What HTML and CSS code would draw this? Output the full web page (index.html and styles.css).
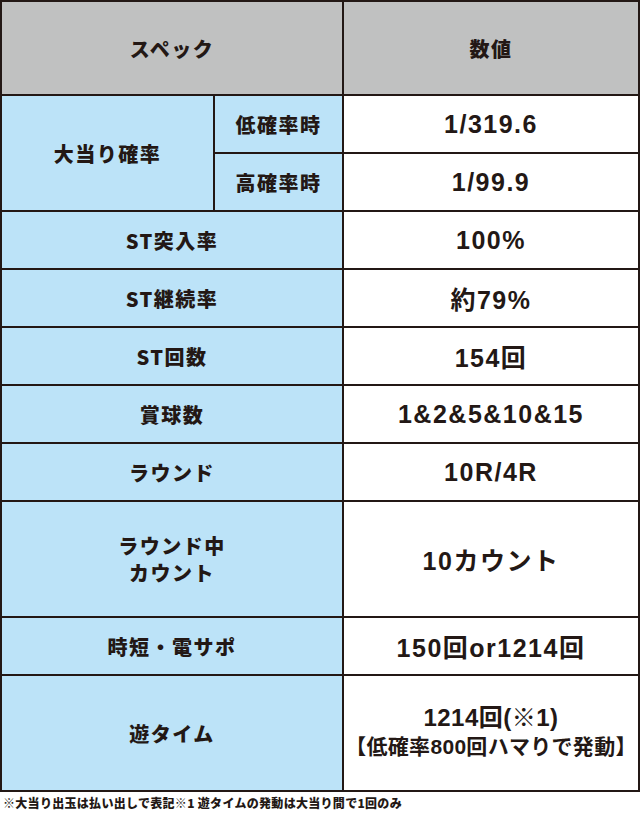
FILE: index.html
```html
<!DOCTYPE html>
<html lang="ja">
<head>
<meta charset="utf-8">
<link rel="stylesheet" href="styles.css">
</head>
<body>
<div class="spec">
  <div class="cell head label-span">スペック</div>
  <div class="cell head value">数値</div>

  <div class="cell label rs2">大当り確率</div>
  <div class="cell label">低確率時</div>
  <div class="cell value num">1/319.6</div>
  <div class="cell label">高確率時</div>
  <div class="cell value num">1/99.9</div>

  <div class="cell label label-span">ST突入率</div>
  <div class="cell value num">100%</div>

  <div class="cell label label-span">ST継続率</div>
  <div class="cell value num">約79%</div>

  <div class="cell label label-span">ST回数</div>
  <div class="cell value num">154回</div>

  <div class="cell label label-span">賞球数</div>
  <div class="cell value num">1&amp;2&amp;5&amp;10&amp;15</div>

  <div class="cell label label-span">ラウンド</div>
  <div class="cell value num">10R/4R</div>

  <div class="cell label label-span rs2 multi">ラウンド中<br>カウント</div>
  <div class="cell value num rs2">10カウント</div>

  <div class="cell label label-span">時短・電サポ</div>
  <div class="cell value num">150回or1214回</div>

  <div class="cell label label-span rs2">遊タイム</div>
  <div class="cell value num rs2 multi"><span class="big">1214回(※1)</span><br>【低確率800回ハマりで発動】</div>
</div>
<p class="note">※大当り出玉は払い出しで表記※1 遊タイムの発動は大当り間で1回のみ</p>
</body>
</html>
```

FILE: styles.css
```css
html, body {
  margin: 0;
  padding: 0;
  background: #ffffff;
}

body {
  width: 640px;
  color: #231815;
  font-family: "Liberation Sans", Arial, "Noto Sans CJK JP", sans-serif;
  font-weight: bold;
}

.spec {
  display: grid;
  grid-template-columns: 211px 127px 294px;
  grid-template-rows: 92px repeat(12, 56px);
  gap: 2px;
  padding: 2px;
  background: #231815;
}

.cell {
  display: flex;
  align-items: center;
  justify-content: center;
  text-align: center;
  white-space: nowrap;
}

.head,
.label {
  font-family: "Noto Sans CJK JP", sans-serif;
  font-size: 20px;
  letter-spacing: 1.5px;
  font-weight: 900;
}

.head {
  background: #c0c1c1;
}

.label {
  background: #bce3f8;
}

.label-span {
  grid-column: span 2;
}

.value {
  background: #ffffff;
}

.head.value {
  background: #c0c1c1;
}

.num {
  font-family: "Liberation Sans", Arial, "Noto Sans CJK JP", sans-serif;
  font-weight: bold;
  font-size: 25px;
  letter-spacing: 1.5px;
}

.rs2 {
  grid-row: span 2;
}

.label.multi {
  line-height: 27px;
}

.value.multi {
  display: block;
  padding-top: 28px;
  font-size: 21px;
  letter-spacing: 0.3px;
  line-height: 28px;
}

.big {
  font-size: 24px;
  letter-spacing: 0.5px;
}

.note {
  margin: 0;
  padding: 4px 0 0 3px;
  font-family: "Noto Sans CJK JP", sans-serif;
  font-weight: 900;
  font-size: 12px;
  line-height: 14px;
  letter-spacing: 0.3px;
}
```
